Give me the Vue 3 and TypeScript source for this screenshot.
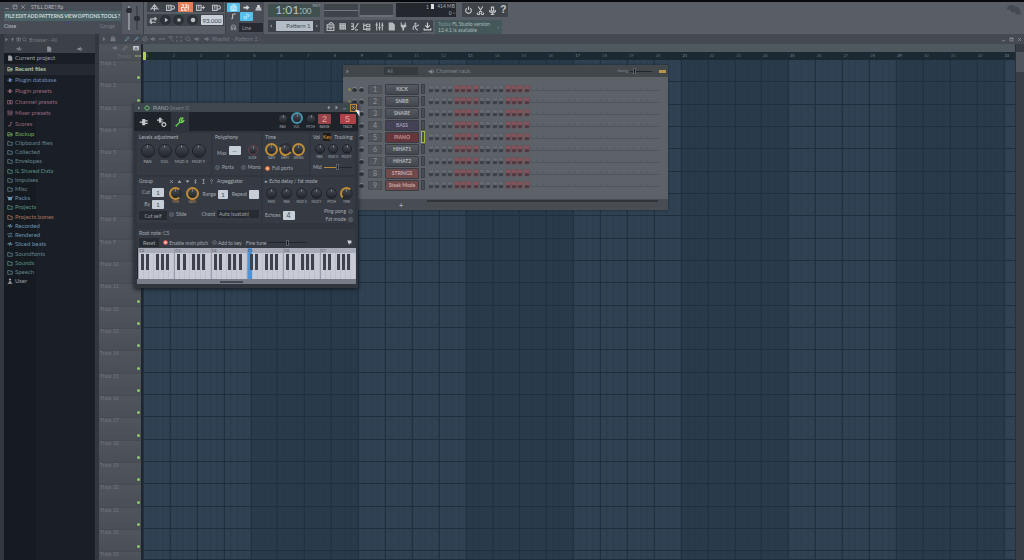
<script setup lang="ts">
import { h, ref } from 'vue'

const paths: Record<string, string> = {
  min: 'M3 12h10', max: 'M3 3h10v10H3zM3 5h10', close: 'M3 3l10 10M13 3L3 13',
  metro: 'M1 12L8 3l7 9M8 3v11M4 10l8 0',
  keys: 'M1 4h14v9H1zM4 4v6M8 4v6M12 4v6',
  keysGear: 'M1 4h8v9H1zM5 4v6M12 5a3 3 0 1 0 .1 0',
  keysPlus: 'M1 4h8v9H1zM5 4v6M10 8h6M13 5v6',
  count: 'M1 3h3v5H1v5h3M7 3h3v5H7v5h3M13 3v10',
  loop: 'M13 5H5a3 3 0 0 0 0 6h7M10 2l3 3-3 3M5 8l-3 3 3 3',
  play: 'F5 2l9 6-9 6z', stop: 'F4 4h8v8H4z', rec: 'F8 2a6 6 0 1 0 .1 0z',
  arrow: 'F1 6h7V2l7 6-7 6v-4H1z', note: 'M6 13V3l7-1M3 13h3', link: 'M6 10l4-4M7 5l3-3 4 4-3 3M9 11l-3 3-4-4 3-3',
  magnet: 'M3 14V7a5 5 0 0 1 10 0v7M3 11h3M10 11h3M6 14V8a2 2 0 0 1 4 0v6',
  stamp: 'F5 2h6v6h3v3H2V8h3zM1 12h14v3H1z',
  playlist: 'M2 5h12v10H2zM2 9h12M5 12h6M5 3l4-2 4 2',
  steps: 'M2 3h12M2 6h12M2 9h12M2 12h12M5 2v12M9 2v12M13 2v12',
  roll: 'M2 3h4v4H2M2 8h4v5H2M15 2L8 12M9 14h5',
  tree: 'M3 2v11h4M3 6h4M8 4h6v4H8zM8 11h6v3H8z',
  mixer: 'M3 1v14M8 1v14M13 1v14M1 5h4M6 10h4M11 6h4',
  file: 'F3 1h7l4 4v10H3z', plug: 'F3 1h2v4h5V1h2v4h1v3l-4 3v4H6v-4L3 8z',
  plugL: 'F1 7h4V3h5v2h4v2h-4v2h4v2h-4v2H5V9H1z',
  touch: 'M8 2a1 1 0 1 1-.1 0M8 5l-4 4v5M8 7v4l4 4M9 8l5-3',
  power: 'M5 4a5 5 0 1 0 6 0M8 1v6', cut: 'M4 1l7 11M12 1L5 12M3 12a2 2 0 1 0 3 0M10 12a2 2 0 1 0 3 0',
  mic: 'M6 2h4v7H6zM3 7v3l3 2h4l3-2V7M8 12v3M5 15h6',
  down: 'M8 1v8M4 6l4 4 4-4M2 11v3h12v-3',
  up: 'F8 2l5 6H9v6H7V8H3z', folder: 'M2 4h5l1 2h6v8H2z', folderOpen: 'M2 13V4h5l1 2h5v3M2 13l3-4h10l-2 4z',
  speaker: 'F1 6h4l5-4v12l-5-4H1zM12 5h2v6h-2z', wave: 'M1 8h3l1-3 2 7 2-9 2 8 1-3h3',
  ticket: 'M1 4h6v9H1zM9 4h5v9H9z', scene: 'M4 13l6-1V3l4 2M3 12l3 2',
  box: 'F1 3l4 2h6l4-2v4l-2 1v6H3V8L1 7z', swap: 'M1 5h12l-3-3M15 11H3l3 3',
  user: 'F8 1a3 3 0 1 1-.1 0zM6 8h4v3l4 2v2H2v-2l4-2z',
  pencil: 'M3 13l1-4 7-7 3 3-7 7z', brush: 'M2 14l5-6M7 8l5-6 2 2-5 6z', no: 'M8 2a6 6 0 1 0 .1 0M4 12l8-8',
  slip: 'M1 8h14M4 5L1 8l3 3M12 5l3 3-3 3', slice: 'M2 2l12 12M2 2h9v5', sel: 'M2 5V2h3M11 2h3v3M14 11v3h-3M5 14H2v-3',
  zoom: 'M7 2a5 5 0 1 0 .1 0M11 11l4 4',
  gear: 'M8 3a5 5 0 1 0 .1 0M8 0v3M8 13v3M0 8h3M13 8h3M3 3l2 2M11 11l2 2M13 3l-2 2M3 13l2-2',
  plugGear: 'F0 4h3V1h4v2h3v1H7v2h3v1H7v2H3V6H0zM11 8a4 4 0 1 1-.1 0zm0 2a2 2 0 1 0 .1 0z',
  wrench: 'M2 14l6-6M8 8a4 4 0 0 1 5-6l-3 3 1 2 3-1a4 4 0 0 1-6 2M1 13l2 2',
  left: 'F11 2v12L4 8z', right: 'F5 2v12l7-6z', tri: 'F2 5h12l-6 7z', triUp: 'F2 12h12L8 4z',
  updown: 'M8 2v12M5 5l3-3 3 3M5 11l3 3 3-3', ibeam: 'M4 2h8M8 2v12M4 14h8', help: 'M5 5a3 3 0 1 1 4 3l-1 1v2M8 13v2',
  bat: 'F0 7l2-4 5-1 3 2 4 1 2 4v5l-2-2-2 2-3-4-3 1-2-3z', cursor: 'F2 1h11v9L9 8l-2 5z',
}
const Ic = (p: { n: string }) => {
  const d = paths[p.n]
  const solid = d[0] === 'F'
  return h('svg', { viewBox: '0 0 16 16', class: 'ic', 'aria-hidden': 'true' }, [
    h('path', {
      d: solid ? 'M' + d.slice(1) : d, fill: solid ? 'currentColor' : 'none',
      stroke: solid ? 'none' : 'currentColor', 'stroke-width': 2, 'fill-rule': 'evenodd',
    }),
  ])
}

const menus = ['FILE', 'EDIT', 'ADD', 'PATTERNS', 'VIEW', 'OPTIONS', 'TOOLS', '?']
const windowIcons = ['playlist', 'steps', 'roll', 'tree', 'mixer', 'file', 'plug', 'touch']
const listTools = ['pencil', 'brush', 'no', 'speaker', 'slip', 'slice', 'sel', 'zoom', 'speaker']
const mainItems = [
  ['file', 'Current project', 'c-grey'], ['folderOpen', 'Recent files', 'c-lime sel'], ['plugL', 'Plugin database', 'c-blue'],
  ['plugL', 'Plugin presets', 'c-pink'], ['ticket', 'Channel presets', 'c-pink'], ['mixer', 'Mixer presets', 'c-pink'], ['scene', 'Scores', 'c-pink'],
]
const folders = [
  ['folderOpen', 'Backup', 'c-green'], ['folder', 'Clipboard files', 'c-teal'], ['folder', 'Collected', 'c-teal'],
  ['folder', 'Envelopes', 'c-teal'], ['folder', 'IL Shared Data', 'c-mint'], ['folder', 'Impulses', 'c-teal'], ['folder', 'Misc', 'c-teal'],
  ['box', 'Packs', 'c-sky'], ['folder', 'Projects', 'c-mint'], ['folder', 'Projects bones', 'c-orange'], ['wave', 'Recorded', 'c-sky'],
  ['swap', 'Rendered', 'c-sky'], ['wave', 'Sliced beats', 'c-sky'], ['folder', 'Soundfonts', 'c-teal'], ['folder', 'Sounds', 'c-mint'],
  ['folder', 'Speech', 'c-teal'], ['user', 'User', 'c-grey'],
]
const channels = [
  ['KICK', ''], ['SNRB', ''], ['SNARE', ''], ['BASS', 'violet'], ['PIANO', 'red'], ['HIHAT1', ''], ['HIHAT2', ''], ['STRINGS', 'brick'], ['Steak Mode', 'brick'],
]
const current = ref(4)
const levels = ['PAN', 'VOL', 'MOD X', 'MOD Y']
const echo = ['FEED', 'PAN', 'MOD X', 'MOD Y', 'PITCH', 'TIME']
const arpIcons = ['close', 'triUp', 'tri', 'updown', 'ibeam', 'help']
const blacks = ['k1', 'k2', 'k3', 'k4', 'k5']
</script>

<template>
  <div class="app">
    <header class="top">
      <section class="menu-panel">
        <div class="caption">
          <button aria-label="Minimize"><Ic n="min" /></button><button aria-label="Maximize"><Ic n="max" /></button><button aria-label="Close"><Ic n="close" /></button>
          <span>STILL DRE?.flp</span>
        </div>
        <nav class="menus"><button v-for="m in menus" :key="m">{{ m }}</button></nav>
        <div class="hint"><span>Close</span><span class="dim">Garage</span></div>
      </section>
      <section class="faders"><i class="fader"><b /></i><i class="fader low"><b /></i></section>
      <section class="transport">
        <div class="strip">
          <button aria-label="Metronome"><Ic n="metro" /></button><button aria-label="Wait for input"><Ic n="keysGear" /></button>
          <button class="orange" aria-label="Countdown"><Ic n="count" /></button><button aria-label="Blend"><Ic n="keysPlus" /></button><button aria-label="Loop record"><Ic n="keysGear" /></button>
        </div>
        <div class="strip tall">
          <button aria-label="Pattern mode"><Ic n="loop" /></button><button class="round" aria-label="Play"><Ic n="play" /></button>
          <button class="round" aria-label="Stop"><Ic n="stop" /></button><button class="round" aria-label="Record"><Ic n="rec" /></button>
          <input class="lcd tempo" aria-label="Tempo" value="93.000">
        </div>
      </section>
      <section class="snap">
        <div class="snap-top">
          <button class="cyan" aria-label="Typing keyboard"><Ic n="playlist" /></button><button aria-label="Step"><Ic n="arrow" /></button><button aria-label="Stamp"><Ic n="stamp" /></button>
          <button aria-label="Note"><Ic n="note" /></button><button class="cyan" aria-label="Link"><Ic n="link" /></button><span />
        </div>
        <div class="snap-line"><Ic n="magnet" /><select aria-label="Snap"><option>Line</option></select></div>
      </section>
      <section class="clock">
        <div class="time"><span>1:01:<small>00</small></span><sup>M:S:T</sup></div>
        <div class="pattern">
          <button aria-label="Previous pattern"><Ic n="left" /></button><button class="pat-name">Pattern 1</button><button aria-label="Next pattern"><Ic n="right" /></button>
        </div>
      </section>
      <section class="monitor">
        <div class="scopes"><div class="scope"><i /></div><div class="scope half"><i /></div></div>
        <div class="win-icons"><button v-for="w in windowIcons" :key="w" :aria-label="w"><Ic :n="w" /></button></div>
      </section>
      <section class="right-tools">
        <div class="rt-row">
          <div class="cpu"><i class="graph" /><span>1</span><i class="bar" /><span class="mem">414 MB<br>0 ◦</span></div>
          <div class="util">
            <button aria-label="Power"><Ic n="power" /></button><button aria-label="Cut"><Ic n="cut" /></button><button aria-label="Record audio"><Ic n="mic" /></button><button class="q" aria-label="Help">?</button>
          </div>
        </div>
        <div class="rt-row news-row">
          <button class="dl" aria-label="Download"><Ic n="down" /></button>
          <a class="news" href="#"><span><em>Today</em> FL Studio version<br>12.4.1 is available</span><i>›</i></a>
        </div>
      </section>
      <Ic class="logo" n="bat" />
    </header>

    <main class="work">
      <aside class="browser">
        <div class="br-title"><Ic n="right" /><Ic n="up" /><Ic n="mixer" /><Ic n="zoom" /><span>Browser - All</span></div>
        <div class="br-tabs"><button aria-label="Plugins"><Ic n="wave" /></button><button aria-label="Files"><Ic n="file" /></button><button aria-label="Sounds"><Ic n="speaker" /></button></div>
        <div class="br-body">
          <ul class="main-list"><li v-for="i in mainItems" :key="i[1]" :class="i[2]"><Ic :n="i[0]" /><a href="#">{{ i[1] }}</a></li></ul>
          <ul class="sub-list"><li v-for="i in folders" :key="i[1]" :class="i[2]"><Ic :n="i[0]" /><a href="#">{{ i[1] }}</a></li></ul>
        </div>
      </aside>

      <section class="playlist">
        <div class="pl-title">
          <Ic n="right" /><Ic class="mag" n="magnet" />
          <div class="tools"><button v-for="(t, i) in listTools" :key="i" :class="{ on: i < 2 }" :aria-label="t"><Ic :n="t" /></button></div>
          <Ic n="speaker" /><span class="pl-name">Playlist - Pattern 1 ›</span>
          <div class="wb"><button aria-label="Minimize"><Ic n="min" /></button><button aria-label="Maximize"><Ic n="max" /></button><button aria-label="Close"><Ic n="close" /></button></div>
        </div>
        <div class="pl-body">
          <div class="tracks">
            <div class="tr-top"><Ic n="wave" /><Ic n="pencil" /><Ic class="kb" n="keys" /></div>
            <div class="tr-sub">Tracks<Ic class="g" n="slip" /></div>
            <div class="tr-list"><div v-for="n in 23" :key="n" class="track" :class="{ last: n === 23 }"><span>Track {{ n }}</span><i /></div></div>
          </div>
          <div class="arrange">
            <div class="gap" />
            <div class="ruler"><span v-for="n in 33" :key="n" :class="{ last: n === 33, first: n === 1, strong: n % 4 === 1 }">{{ n }}</span></div>
            <div class="field">
              <div class="cols"><i v-for="n in 33" :key="n" :class="{ last: n === 33, alt: Math.floor((n - 1) / 4) % 2 === 1 }" /></div>
              <div class="rows"><i v-for="n in 23" :key="n" :class="{ last: n === 23 }" /></div>
            </div>
          </div>
          <div class="vscroll"><i /></div>
        </div>
      </section>
    </main>

    <section class="rack">
      <div class="rk-head">
        <Ic n="right" /><select aria-label="Filter"><option>All</option></select><Ic class="spk" n="speaker" /><span class="rk-title">Channel rack</span>
        <label class="swing">Swing<input type="range" min="0" max="100" value="15"></label><i class="yellow" />
      </div>
      <div class="rk-body">
        <div v-for="(c, i) in channels" :key="c[0]" class="ch">
          <i class="led" /><i class="mini" /><i class="mini" /><span class="num">{{ i + 1 }}</span>
          <button class="name" :class="c[1]" @click="current = i">{{ c[0] }}</button>
          <i class="pick" :class="{ on: current === i }" />
          <div class="steps"><button v-for="s in 16" :key="s" :class="{ r: Math.floor((s - 1) / 4) % 2 === 1 }" :aria-label="`${c[0]} step ${s}`" /></div>
          <div class="ghost"><i v-for="s in 20" :key="s" /></div>
        </div>
      </div>
      <div class="rk-foot"><button aria-label="Add channel">+</button><i class="hbar" /></div>
    </section>

    <section class="plugin">
      <div class="pg-title">
        <Ic n="right" /><Ic class="green" n="gear" /><span>PIANO <em>(Insert 5)</em></span>
        <div class="pg-nav"><Ic n="left" /><Ic n="right" /><Ic n="min" /><button aria-label="Close plugin"><Ic n="close" /></button></div>
      </div>
      <div class="pg-tabs">
        <button aria-label="Plugin"><Ic n="plugL" /></button><button aria-label="Settings"><Ic n="plugGear" /></button><button class="on" aria-label="Tools"><Ic n="wrench" /></button>
        <div class="pg-out">
          <span class="dial"><i class="knob" />PAN</span><span class="dial"><i class="knob blue" />VOL</span><span class="dial"><i class="knob" />PITCH</span>
          <span class="dial red"><b>2</b>RANGE</span><span class="dial red wide"><b>5</b>TRACK</span>
        </div>
      </div>
      <div class="pg-grid top-grid">
        <div class="pn">
          <h4>Levels adjustment</h4>
          <div class="dials big"><span v-for="l in levels" :key="l" class="dial"><i class="knob" />{{ l }}</span></div>
        </div>
        <div class="pn">
          <h4>Polyphony</h4>
          <div class="line mid"><label>Max <input class="lcd" value="--"></label><span class="dial dimred"><i class="knob" />SLIDE</span></div>
          <div class="line radios"><label><input type="radio" name="poly">Porta</label><label><input type="radio" name="poly">Mono</label></div>
        </div>
        <div class="pn">
          <h4>Time</h4>
          <div class="dials time-dials"><span class="dial"><i class="knob gold" />GATE</span><span class="dial"><i class="knob gold part" />SHIFT</span><span class="dial"><i class="knob gold" />SWING</span></div>
          <div class="line radios"><label><input type="checkbox" class="amber" checked>Full porta</label></div>
        </div>
        <div class="pn">
          <h4>Vol <mark>Key</mark> Tracking</h4>
          <div class="dials"><span class="dial"><i class="knob" />PAN</span><span class="dial"><i class="knob" />MOD X</span><span class="dial"><i class="knob" />MOD Y</span></div>
          <div class="line radios"><label>Mid <input type="range" class="gold-range" value="50"></label></div>
        </div>
      </div>
      <div class="pg-grid low-grid">
        <div class="pn arp">
          <div class="group">
            <h4>Group</h4>
            <label>Cut <input class="lcd" value="1"></label><label>By <input class="lcd" value="1"></label>
            <button class="dark">Cut self</button>
          </div>
          <div class="arp-main">
            <h4><Ic v-for="a in arpIcons" :key="a" :n="a" /> Arpeggiator</h4>
            <div class="line arp-line">
              <span class="dial"><i class="knob gold part2" />TIME</span><span class="dial"><i class="knob gold" />GATE</span>
              <label>Range <input class="lcd" value="1"></label><label>Repeat <input class="lcd" value=""></label>
            </div>
            <div class="line chord"><label><input type="checkbox">Slide</label><label>Chord <select><option>Auto (sustain)</option></select></label></div>
          </div>
        </div>
        <div class="pn">
          <h4>▸ Echo delay / fat mode</h4>
          <div class="dials echo"><span v-for="(e, i) in echo" :key="e" class="dial"><i class="knob" :class="{ 'gold part3': i === 5 }" />{{ e }}</span></div>
          <div class="echo-low">
            <label>Echoes <input class="lcd" value="4"></label>
            <div><label>Ping pong <input type="checkbox"></label><label>Fat mode <input type="checkbox"></label></div>
          </div>
        </div>
      </div>
      <div class="pg-foot">
        <p>Root note: C5</p>
        <div class="foot-line">
          <button class="dark">Reset</button><label><input type="checkbox" class="redbox" checked>Enable main pitch</label><label><input type="checkbox">Add to key</label>
          <label class="fine">Fine tune <input type="range" value="50"></label><Ic n="cursor" />
        </div>
      </div>
      <div class="piano">
        <div v-for="o in 6" :key="o" class="oct">
          <i v-for="w in 7" :key="w" class="white" :class="{ hit: o === 4 && w === 1 }" />
          <i v-for="b in blacks" :key="b" class="black" :class="b" />
          <small>C{{ o + 1 }}</small>
        </div>
      </div>
      <div class="pscroll"><i /></div>
    </section>
    <svg class="pointer" viewBox="0 0 8 10" aria-hidden="true"><path d="M0 0l6 1v8L4 6z" fill="#e8ecf0" /></svg>
  </div>
</template>

<style>
html, body { background: #1a1e25; }
</style>

<style scoped>
.app { position: relative; display: flex; flex-direction: column; height: 100vh; overflow: hidden; background: #1a1e25; color: #959ba1; font: 5px/8px Lato, "Liberation Sans", sans-serif; }
.app *, .app *::before { box-sizing: border-box; }
button, input, select { font: inherit; color: inherit; background: none; border: 0; padding: 0; margin: 0; min-width: 0; appearance: none; border-radius: 0; }
button { display: flex; align-items: center; justify-content: center; }
a { color: inherit; text-decoration: none; }
em { font-style: normal; opacity: .6; }
h4, p, ul { margin: 0; padding: 0; font-weight: normal; list-style: none; }
.ic { width: 7px; height: 7px; flex: none; display: block; }
label { display: flex; align-items: center; gap: 2px; white-space: nowrap; }

/* toolbar */
.top { display: flex; height: 34px; border-top: 2px solid #08090c; background: #595e66; flex: none; }
.menu-panel { width: 122px; display: flex; flex-direction: column; background: #484d55; padding: 0 1px 3px 4px; }
.caption { display: flex; align-items: center; height: 9px; gap: 2px; }
.caption .ic { width: 6px; height: 6px; }
.caption span { margin-left: 3px; color: #b6bbbf; }
.menus { display: flex; justify-content: space-between; height: 10px; background: #4a6266; color: #d0dadb; font-weight: bold; padding: 0 1px; }
.hint { display: flex; justify-content: space-between; height: 10px; align-items: center; padding-right: 6px; color: #bbbfc2; }
.dim { color: #777c82; }
.faders { width: 22px; display: flex; justify-content: center; gap: 6px; padding: 4px 0; background: #555a62; border-right: 1px solid #3b3f46; }
.fader { width: 2px; background: #8b9096; display: flex; justify-content: center; padding-top: 2px; }
.fader b { width: 6px; height: 5px; flex: none; border-radius: 2px; background: #2b2f35; }
.fader.low { padding-top: 10px; background: #42464d; }
.transport { width: 77px; margin-left: 3px; display: flex; flex-direction: column; gap: 2px; }
.strip { display: grid; grid-template-columns: repeat(5, 1fr); height: 10px; background: #3e4249; color: #b9bec3; }
.strip .ic { width: 9px; height: 9px; }
.tall { height: 12px; grid-template-columns: 12px 12px 13px 13px 22px; gap: 1px; align-items: center; }
.round { height: 10px; width: 11px; border-radius: 5px; background: #2c3037; }
.strip .round .ic { width: 6px; height: 6px; }
.orange { background: #e27e58; color: #fbe3d8; }
.lcd { background: #c6ced7; color: #40464e; width: 12px; height: 9px; border-radius: 1px; text-align: center; font-size: 6px; }
.tempo { width: 22px; height: 10px; }
.snap { width: 39px; margin-left: 1px; background: #484c54; padding: 1px; border-left: 1px solid #3a3e45; }
.snap-top { display: grid; grid-template-columns: 13px 13px 10px; grid-auto-rows: 9px; color: #d3d7da; }
.snap-top .cyan { background: #55bfe9; color: #e6f7ff; border-radius: 1px; }
.snap-line { display: flex; align-items: center; gap: 2px; margin-top: 2px; padding-left: 3px; }
.snap-line select { flex: 1; background: #272b31; height: 9px; padding-left: 3px; }
.clock { width: 52px; margin-left: 4px; display: flex; flex-direction: column; gap: 3px; padding-top: 2px; }
.time { height: 13px; background: #40504f; color: #b5c4c2; display: flex; justify-content: flex-end; align-items: center; font-size: 12px; line-height: 13px; gap: 1px; }
.time small { font-size: 8px; }
.time sup { font-size: 3px; align-self: flex-start; line-height: 4px; }
.pattern { display: flex; justify-content: space-between; align-items: center; height: 12px; background: #3d4148; padding: 1px; }
.pattern .ic { width: 4px; height: 4px; }
.pat-name { width: 37px; height: 10px; background: #b4bdc7; color: #454b53; font-size: 6px; justify-content: flex-end; padding-right: 2px; }
.monitor { width: 98px; margin-left: 4px; display: flex; flex-direction: column; gap: 3px; padding-top: 2px; }
.scopes { display: flex; gap: 2px; height: 13px; width: 69px; }
.scope { flex: 1; background: #3f444b; display: flex; align-items: center; }
.scope i { flex: 1; height: 1px; background: #70767c; }
.scope.half { align-items: flex-end; border-bottom: 2px solid #6b7076; }
.scope.half i { background: none; }
.win-icons { display: flex; justify-content: space-around; height: 13px; background: #41454c; color: #b6bbc0; }
.win-icons .ic { width: 9px; height: 9px; }
.right-tools { margin-left: -26px; padding-top: 1px; display: flex; flex-direction: column; gap: 3px; }
.rt-row { display: flex; gap: 6px; }
.cpu { width: 60px; height: 14px; background: #24282e; display: flex; gap: 2px; padding: 0 1px 0 2px; color: #a7adb2; }
.graph { flex: 1; }
.cpu .bar { width: 3px; height: 5px; background: #dde1e4; margin-top: 1px; }
.mem { text-align: right; line-height: 7px; width: 19px; white-space: nowrap; }
.util { width: 46px; height: 14px; display: flex; justify-content: space-around; background: #3f434a; color: #c3c7cb; }
.util .ic { width: 9px; height: 9px; }
.q { font: bold 10px/12px "Liberation Sans", sans-serif; }
.news-row { margin-left: 26px; gap: 2px; }
.dl { width: 11px; height: 12px; background: #3f434a; color: #c9cdd0; }
.dl .ic { width: 9px; height: 9px; }
.news { display: flex; justify-content: space-between; width: 67px; height: 14px; background: #44585a; color: #a9bbba; padding: 0 3px; line-height: 6px; align-items: center; white-space: nowrap; }
.news i { font-style: normal; }
.top > .logo { margin: 1px 2px 0 auto; width: 17px; height: 14px; color: #454951; }

/* browser */
.work { flex: 1; display: flex; min-height: 0; }
.browser { width: 99px; flex: none; display: flex; flex-direction: column; background: #3c4047; border-left: 4px solid #33373e; border-right: 4px solid #33373e; }
.br-title { display: flex; align-items: center; gap: 1px; height: 11px; color: #80868c; }
.br-title .ic { width: 5px; height: 5px; }
.br-title span { margin-left: 1px; color: #757b81; }
.br-tabs { display: grid; grid-template-columns: repeat(3, 1fr); height: 8px; color: #8b9197; }
.br-tabs .ic { width: 6px; height: 6px; }
.br-body { flex: 1; background: linear-gradient(to right, #161b22 32px, #1a1e26 32px); }
.main-list { display: grid; grid-auto-rows: 1fr; height: 76px; }
.sub-list { display: grid; grid-auto-rows: 1fr; height: 157px; }
li { display: flex; align-items: center; gap: 2px; padding-left: 3px; font-size: 6px; }
li .ic { width: 6px; height: 6px; }
.sel { background: #252a32; font-weight: bold; }
.c-grey { color: #9da2a7; } .c-lime { color: #b5c9a6; } .c-blue { color: #6f88b8; } .c-pink { color: #96677b; }
.c-green { color: #73a85d; } .c-teal { color: #64848b; } .c-mint { color: #5b9281; } .c-sky { color: #6c93ac; } .c-orange { color: #a87458; }

/* playlist */
.playlist { flex: 1; min-width: 0; display: flex; flex-direction: column; }
.pl-title { display: flex; align-items: center; height: 10px; background: #454951; color: #747a81; padding: 0 2px; flex: none; }
.pl-title > .ic { width: 6px; height: 6px; }
.pl-title > .mag { margin: 0 6px 0 2px; width: 8px; color: #8f959b; }
.tools { display: grid; grid-template-columns: repeat(9, 1fr); width: 78px; margin-right: 3px; }
.tools .on { color: #6d93a7; }
.tools .ic { width: 6px; height: 6px; }
.pl-name { margin-left: 2px; font-size: 6px; font-style: italic; }
.wb { margin-left: auto; display: flex; gap: 3px; }
.wb .ic { width: 5px; height: 5px; color: #9a9fa5; }
.pl-body { flex: 1; display: flex; min-height: 0; }
.tracks { width: 44px; display: flex; flex-direction: column; background: #4c5057; border-right: 2px solid #20262d; }
.tr-top { height: 8px; display: flex; justify-content: flex-end; align-items: center; gap: 4px; padding-right: 1px; background: #4f535a; color: #7b8187; }
.tr-top .ic { width: 6px; height: 6px; }
.tr-top .kb { width: 8px; color: #e5e8ea; }
.tr-sub { height: 8px; display: flex; justify-content: flex-end; align-items: center; gap: 4px; color: #676c73; }
.tr-sub .g { width: 6px; height: 6px; color: #9cae8a; }
.tr-list, .rows { flex: 1; display: flex; flex-direction: column; overflow: hidden; }
.track { flex: 22 0 0; min-height: 0; display: flex; justify-content: space-between; color: #747980; padding-left: 1px; background: linear-gradient(#50545b, #4a4e55); border-top: 1px solid #464a51; line-height: 5px; }
.track i { width: 3px; height: 3px; border-radius: 2px; background: #8fc471; align-self: flex-end; margin: 0 1px 3px 0; }
.track.last, .rows .last { flex-grow: 8; }
.track.last i { display: none; }
.arrange { flex: 1; min-width: 0; display: flex; flex-direction: column; }
.gap { height: 8px; background: #50585f; }
.ruler { height: 8px; display: flex; background: #1b2932; color: #66727a; font-size: 4px; }
.ruler span { flex: 10 0 0; min-width: 0; line-height: 8px; }
.ruler .strong { color: #83919a; }
.ruler .first { border-left: 3px solid #b6d14f; }
.ruler .last, .cols .last { flex-grow: 4; }
.field { flex: 1; display: grid; min-height: 0; }
.cols, .rows { grid-area: 1 / 1; min-height: 0; }
.cols { display: flex; }
.cols i { flex: 10 0 0; border-left: 1px solid #203241; background: linear-gradient(to right, #2f4152 84%, #2b3d4d 84%) 0 0 / 25% 100%; }
.cols .alt { background-image: linear-gradient(to right, #293b4b 84%, #263747 84%); }
.rows i { flex: 22 0 0; border-bottom: 1px solid #1e303e; }
.vscroll { width: 9px; background: #383c43; padding-top: 8px; border-left: 1px solid #2a2e35; }
.vscroll i { display: block; height: 20px; background: #50545b; }

/* channel rack */
.rack { position: absolute; left: 343px; top: 65px; width: 325px; background: #5d6269; box-shadow: 0 0 2px #1a2630; }
.rk-head { display: flex; align-items: center; height: 12px; background: #42474b; color: #80868b; padding: 0 2px; }
.rk-head > .ic { width: 5px; height: 5px; }
.rk-head select { width: 34px; height: 8px; margin-left: 34px; background: #353a3e; padding-left: 3px; }
.rk-head > .spk { width: 7px; height: 7px; margin: 0 1px 0 10px; }
.rk-title { font-size: 6px; }
.swing { margin-left: auto; margin-right: 7px; font-size: 4px; }
.swing input { width: 22px; }
.yellow { background: #b8934a; width: 7px; height: 3px; }
.rk-body { padding: 6px 9px 8px 5px; }
.ch { display: flex; align-items: center; height: 12px; }
.led { width: 3px; height: 3px; border-radius: 2px; background: #8a8657; margin-right: 1px; }
.mini { width: 5px; height: 5px; border-radius: 3px; background: #30343a; margin-right: 2px; border-top: 1px solid #888d92; }
.num { width: 14px; height: 9px; margin: 0 3px 0 2px; background: #50555c; border: 1px solid #494d54; text-align: center; font-size: 7px; line-height: 7px; color: #8e9398; }
.name { width: 34px; height: 11px; background: linear-gradient(#565b61, #42474d); color: #b6babd; border: 1px solid #393d43; border-radius: 1px; white-space: nowrap; font-weight: bold; }
.name.violet { background: #434155; color: #9e9aae; } .name.red { background: #65363b; color: #c79695; } .name.brick { background: #70494a; color: #c9aaa7; }
.pick { width: 4px; height: 10px; background: #484d53; border: 1px solid #3c4046; margin: 0 3px 0 2px; }
.pick.on { background: #48523c; border-color: #a5bb3e; height: 12px; }
.steps { display: grid; grid-template-columns: repeat(16, 1fr); width: 102px; }
.steps button { height: 8px; width: 6px; border-radius: 0 0 2px 2px; background: linear-gradient(#666b72 40%, #3b3f46 60%); border: 1px solid #585d64; }
.steps .r { background: linear-gradient(#84545a 45%, #4c3b42 60%); border-color: #6b545b; }
.ghost { flex: 1; display: grid; grid-template-columns: repeat(20, 1fr); }
.ghost i { height: 4px; border-bottom: 1px solid #4f545b; border-left: 1px solid #555a62; }
.rk-foot { display: flex; height: 11px; background: #484c53; align-items: center; }
.rk-foot button { width: 34px; margin-left: 41px; font-size: 8px; color: #c4c8ca; }
.hbar { flex: 1; height: 2px; background: #31353a; margin: 1px 10px 0 9px; align-self: flex-start; }

/* plugin window */
.plugin { position: absolute; left: 134px; top: 103px; width: 224px; background: #31363e; padding: 0 3px 4px; box-shadow: 0 1px 4px #10161d; color: #a4aab0; }
.pg-title { display: flex; align-items: center; gap: 3px; height: 9px; margin: 0 -3px; padding: 0 1px 0 3px; background: #3e474e; }
.pg-title > .ic { width: 4px; height: 4px; }
.pg-title > .green { width: 6px; height: 6px; color: #6dba70; }
.pg-nav { margin-left: auto; display: flex; align-items: center; gap: 3px; }
.pg-nav .ic { width: 5px; height: 5px; }
.pg-nav button { width: 7px; height: 8px; border: 1px solid #b38549; color: #d3a55e; }
.pg-tabs { display: flex; height: 19px; margin: 0 -3px; padding-left: 1px; background: #1e2229; }
.pg-tabs > button { width: 18px; color: #c3c7cb; }
.pg-tabs > button .ic { width: 10px; height: 10px; }
.pg-tabs > .on { background: #30353d; color: #68d14f; }
.pg-out { margin-left: auto; display: flex; align-items: center; gap: 1px; padding-right: 2px; }
.dial { display: flex; flex-direction: column; align-items: center; width: 13px; font-size: 3px; line-height: 6px; white-space: nowrap; color: #a9afb5; }
.knob { position: relative; width: 10px; height: 10px; border-radius: 50%; background: linear-gradient(#454a51, #22262c); border: 1px solid #1e2228; }
.knob::before { content: ""; position: absolute; left: 4px; top: 0; width: 1px; height: 3px; background: #6f757c; }
.blue { border: 2px solid #4893ad; width: 12px; height: 12px; margin-top: -2px; }
.red b { height: 10px; width: 13px; background: #974349; color: #e7a09c; font: 9px/10px "Liberation Sans", sans-serif; text-align: center; border-radius: 1px; }
.wide { width: 17px; margin-left: 7px; }
.wide b { width: 16px; background: #ac4248; }
.pg-grid { display: grid; gap: 2px; }
.top-grid { grid-template-columns: 74px 48px 46px minmax(0, 1fr); padding-top: 2px; }
.low-grid { grid-template-columns: 124px minmax(0, 1fr); padding-top: 2px; }
.pn { background: #363b43; padding: 0 2px; height: 42px; }
h4 { display: flex; align-items: center; gap: 3px; height: 8px; white-space: nowrap; color: #aeb4ba; }
h4 .ic { width: 5px; height: 5px; }
mark { background: #201c18; color: #d99b3c; }
.dials { display: flex; justify-content: space-between; margin-top: 3px; }
.big { justify-content: flex-start; }
.big .dial { width: 17px; font-size: 4px; }
.big .knob { width: 14px; height: 14px; margin-bottom: 1px; }
.big .knob::before { left: 5px; }
.time-dials { width: 40px; }
.gold { width: 13px; height: 13px; border: 2px solid #c08c35; margin-top: -1px; margin-bottom: -1px; }
.part { border-right-color: #2a2e34; border-top-color: #2a2e34; transform: rotate(-20deg); }
.part2, .part3 { border-right-color: #2a2e34; }
.part3 { border-bottom-color: #2a2e34; }
.line { display: flex; align-items: center; }
.mid { justify-content: space-between; margin-top: 3px; height: 17px; }
.mid label { padding-left: 2px; }
.mid .lcd { margin-top: -5px; }
.dimred .knob { border-color: #6c3d48; }
.radios { gap: 7px; height: 8px; margin-top: 3px; }
.mid + .radios { margin-top: 2px; }
input[type=radio], input[type=checkbox] { width: 5px; height: 5px; border-radius: 3px; background: #4c5259; border: 1px solid #5b6168; flex: none; }
input.amber { background: #f0b48f; border-color: #e0642f; }
input.redbox { background: #f5b1a8; border-color: #d64d48; }
input[type=range] { height: 6px; background: linear-gradient(#22262b, #22262b) 0 50% / 100% 1px no-repeat; }
input[type=range]::-webkit-slider-thumb { appearance: none; width: 3px; height: 6px; background: #15191e; border: 1px solid #5b6168; }
input.gold-range { width: 28px; background-image: linear-gradient(to right, #b88834 50%, #22262b 50%); }
.arp { display: flex; }
.low-grid .pn { height: 46px; }
.group { width: 28px; display: flex; flex-direction: column; gap: 2px; }
.group label { justify-content: flex-end; height: 10px; padding-right: 3px; }
.dark { background: #272b32; height: 9px; padding: 0 4px; color: #a1a7ad; white-space: nowrap; }
.arp-main { flex: 1; padding-left: 2px; min-width: 0; }
.arp-line { margin-top: 3px; justify-content: space-between; height: 18px; }
.arp-line .dial { align-self: flex-start; }
.arp-line .lcd { width: 10px; }
.arp-line label { margin-top: -6px; }
.arp-line .dial { color: #c2934a; }
.chord { justify-content: space-between; margin-top: 4px; }
.chord select { background: #272b32; width: 42px; height: 8px; padding-left: 2px; }
.echo .knob:not(.gold) { width: 11px; height: 11px; }
.echo-low { display: flex; justify-content: space-between; align-items: center; margin-top: 2px; }
.echo-low > div { display: flex; flex-direction: column; align-items: flex-end; }
.echo-low .lcd { font-size: 7px; }
.pg-foot { margin-top: 6px; background: #363b43; padding: 0 2px; height: 19px; }
.foot-line { display: flex; align-items: center; gap: 4px; height: 11px; }
.foot-line label { gap: 1px; }
.fine input { width: 40px; }
.foot-line > .ic { margin-left: auto; width: 7px; height: 6px; color: #ced2d5; }
.piano { display: flex; height: 31px; margin: 0 -1px 0 0; border-left: 1px solid #22262c; background: #a7abb7; }
.oct { position: relative; flex: 1; display: flex; padding-top: 5px; border-left: 1px solid #989ca8; }
.white { flex: 1; background: #c8cad5; border-right: 1px solid #bdbfca; }
.white.hit { background: #4f93d8; margin-top: -5px; }
.black { position: absolute; top: 6px; width: 3px; height: 16px; background: #3e424c; }
.k1 { left: 6%; } .k2 { left: 21%; } .k3 { left: 47%; } .k4 { left: 61%; } .k5 { left: 76%; }
.oct small { position: absolute; left: 0; top: 0; font-size: 4px; line-height: 5px; color: #4b505a; }
.pscroll { height: 5px; margin-right: -1px; background: #787c88; display: flex; justify-content: center; align-items: center; }
.pscroll i { width: 23px; height: 2px; background: #42464f; margin-left: -30px; }
.pointer { position: absolute; left: 355px; top: 109px; width: 6px; height: 9px; }
</style>
